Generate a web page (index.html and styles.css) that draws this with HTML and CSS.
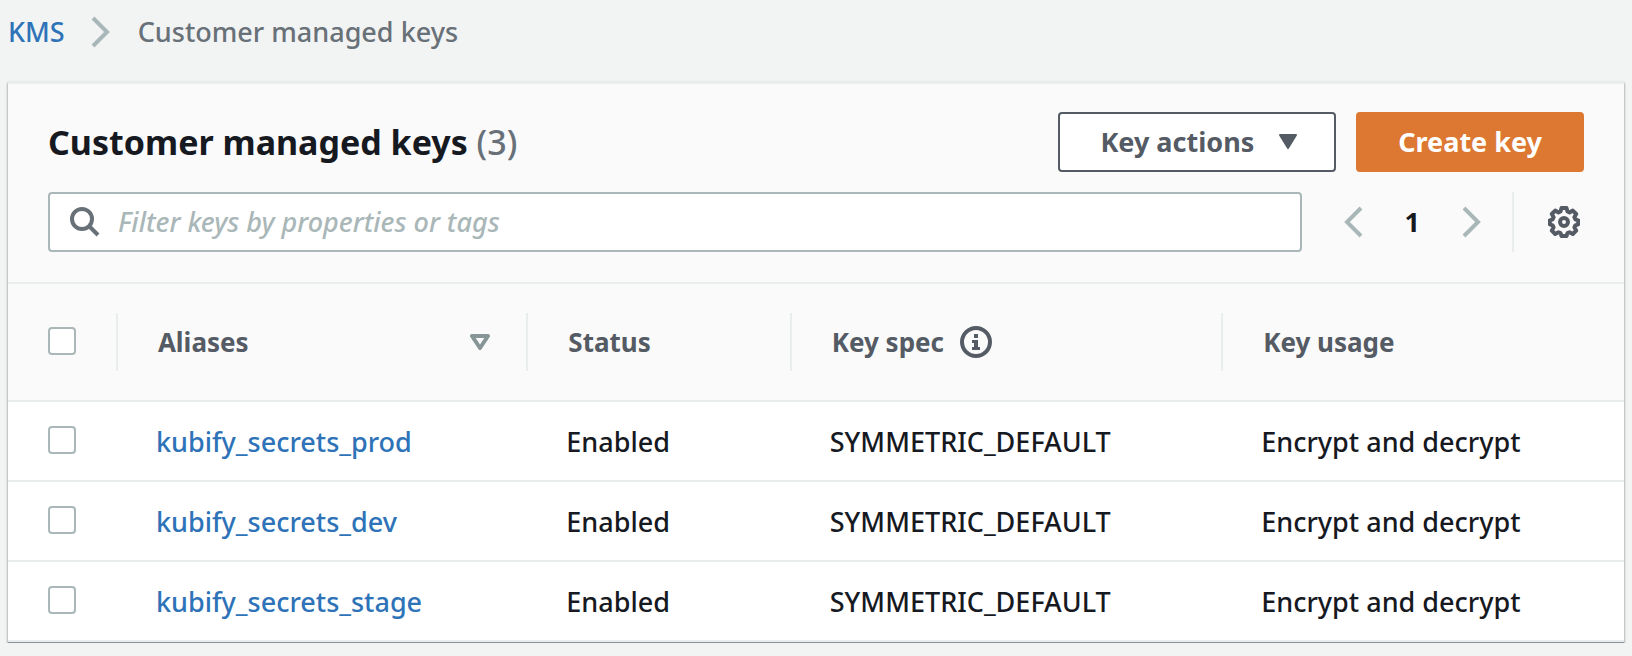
FILE: index.html
```html
<!DOCTYPE html>
<html lang="en">
<head>
<meta charset="utf-8">
<title>Customer managed keys</title>
<link rel="stylesheet" href="styles.css">
</head>
<body>
<nav class="breadcrumb" aria-label="Breadcrumb">
  <a class="link" href="#">KMS</a>
  <svg class="chevron" viewBox="0 0 20 32" aria-hidden="true"><path d="M2 2l14 14L2 30"/></svg>
  <span>Customer managed keys</span>
</nav>
<main class="panel">
  <header class="toolbar">
    <div class="title-row">
      <h1 class="title">Customer managed keys <span class="count">(3)</span></h1>
      <div class="actions">
        <button class="button" type="button">Key actions
          <svg class="caret" viewBox="0 0 20 16" aria-hidden="true"><path d="M2 1h16l-8 13z"/></svg>
        </button>
        <button class="button button-primary" type="button">Create key</button>
      </div>
    </div>
    <div class="filter-row">
      <label class="search">
        <svg class="search-icon" viewBox="0 0 30 30" aria-hidden="true"><circle cx="12" cy="12" r="10"/><path d="M19 19l9 9"/></svg>
        <input class="search-input" type="text" placeholder="Filter keys by properties or tags" aria-label="Filter keys">
      </label>
      <div class="pagination">
        <button class="icon-button" type="button" aria-label="Previous page"><svg class="chevron" viewBox="0 0 20 32" aria-hidden="true"><path d="M18 2L4 16l14 14"/></svg></button>
        <button class="icon-button page" type="button">1</button>
        <button class="icon-button" type="button" aria-label="Next page"><svg class="chevron" viewBox="0 0 20 32" aria-hidden="true"><path d="M2 2l14 14L2 30"/></svg></button>
      </div>
      <div class="settings">
        <button class="icon-button" type="button" aria-label="Preferences">
          <svg class="gear" viewBox="0 0 32 32" aria-hidden="true"><path d="M13.500 2h5l1 3.500 2 .900 3.300-1.800 3.400 3.400-1.800 3.300.900 2 2.900 1v4l-2.900 1-.900 2 1.800 3.300-3.400 3.400-3.300-1.800-2 .900-1 2.900h-5l-1-2.900-2-.900-3.300 1.800-3.400-3.400 1.800-3.300-.900-2-2.900-1v-4l2.900-1 .900-2-1.800-3.300 3.400-3.400 3.300 1.800 2-.900z"/><circle cx="16" cy="16" r="4"/></svg>
        </button>
      </div>
    </div>
  </header>
  <table class="keys">
    <colgroup><col class="col-select"><col class="col-alias"><col class="col-status"><col class="col-spec"><col></colgroup>
    <thead>
      <tr>
        <th><div class="head"><input class="check" type="checkbox" aria-label="Select all keys"></div></th>
        <th><div class="head">Aliases <svg class="caret caret-sort" viewBox="0 0 20 16" aria-hidden="true"><path d="M2 2h16l-8 12z"/></svg></div></th>
        <th><div class="head">Status</div></th>
        <th><div class="head">Key spec <svg class="info" viewBox="0 0 32 32" aria-hidden="true"><circle cx="16" cy="16" r="14"/><path d="M14 8h4v4h-4zM12 14h6v7h2v3h-8v-3h2v-4h-2z"/></svg></div></th>
        <th><div class="head">Key usage</div></th>
      </tr>
    </thead>
    <tbody>
      <tr>
        <td><input class="check" type="checkbox" aria-label="Select kubify_secrets_prod"></td>
        <td><a class="link" href="#">kubify_secrets_prod</a></td>
        <td>Enabled</td><td>SYMMETRIC_DEFAULT</td><td>Encrypt and decrypt</td>
      </tr>
      <tr>
        <td><input class="check" type="checkbox" aria-label="Select kubify_secrets_dev"></td>
        <td><a class="link" href="#">kubify_secrets_dev</a></td>
        <td>Enabled</td><td>SYMMETRIC_DEFAULT</td><td>Encrypt and decrypt</td>
      </tr>
      <tr>
        <td><input class="check" type="checkbox" aria-label="Select kubify_secrets_stage"></td>
        <td><a class="link" href="#">kubify_secrets_stage</a></td>
        <td>Enabled</td><td>SYMMETRIC_DEFAULT</td><td>Encrypt and decrypt</td>
      </tr>
    </tbody>
  </table>
</main>
</body>
</html>
```
FILE: styles.css
```css
* { box-sizing: border-box; }

body {
  margin: 0;
  padding: 0 8px;
  background: #f2f3f3;
  color: #16191f;
  font: 500 27px/40px "Noto Sans", "Open Sans", sans-serif;
}

button, input { font: inherit; }

.link { color: #2e73b8; text-decoration: none; }

.breadcrumb {
  display: flex;
  align-items: center;
  padding: 12px 0 30px;
  color: #687078;
}
.breadcrumb .chevron { margin: 0 27px 0 26px; }

.chevron {
  display: block;
  width: 20px;
  height: 32px;
  fill: none;
  stroke: #aab7b8;
  stroke-width: 4;
}

.panel {
  border-top: 2px solid #eaeded;
  border-bottom: 1px solid #879196;
  background: #fff;
  box-shadow: 0 1px 2px rgba(0, 28, 36, .3), 1px 1px 2px rgba(0, 28, 36, .15), -1px 1px 2px rgba(0, 28, 36, .15);
}

.toolbar {
  padding: 28px 40px 30px;
  background: #fafafa;
  border-bottom: 2px solid #eaeded;
}

.title-row {
  display: flex;
  align-items: center;
  justify-content: space-between;
  margin-bottom: 20px;
}
.title { margin: 0; font-size: 34px; font-weight: 700; }
.count { color: #687078; font-weight: 500; }
.actions { display: flex; gap: 20px; }

.button {
  display: flex;
  align-items: center;
  gap: 24px;
  height: 60px;
  padding: 0 36px 0 40px;
  border: 2px solid #545b64;
  border-radius: 4px;
  background: #fff;
  color: #545b64;
  font-weight: 700;
}
.button-primary {
  padding: 0 40px;
  border-color: #dd7832;
  background: #dd7832;
  color: #fff;
}

.caret {
  width: 20px;
  height: 16px;
  fill: #545b64;
  stroke: #545b64;
  stroke-width: 2;
  stroke-linejoin: round;
}
.caret-sort {
  margin-left: auto;
  fill: none;
  stroke: #879596;
  stroke-width: 4;
}

.filter-row { display: flex; align-items: stretch; }

.search {
  flex: 1;
  display: flex;
  align-items: center;
  gap: 18px;
  height: 60px;
  padding: 0 20px;
  border: 2px solid #aab7b8;
  border-radius: 4px;
  background: #fff;
}
.search-icon {
  flex: none;
  width: 30px;
  height: 30px;
  fill: none;
  stroke: #687078;
  stroke-width: 4;
}
.search-input {
  flex: 1;
  min-width: 0;
  height: 40px;
  padding: 0;
  border: 0;
  outline: 0;
  background: none;
}
.search-input::placeholder { color: #aab7b8; font-style: italic; opacity: 1; }

.icon-button {
  padding: 0;
  border: 0;
  background: none;
}
.pagination {
  display: flex;
  align-items: center;
  gap: 42px;
  padding: 0 30px 0 41px;
}
.page { color: #16191f; font-weight: 700; }
.settings {
  display: flex;
  align-items: center;
  padding: 0 4px 0 34px;
  border-left: 2px solid #eaeded;
}
.gear {
  display: block;
  width: 32px;
  height: 32px;
  fill: none;
  stroke: #545b64;
  stroke-width: 4;
  stroke-linejoin: round;
}

.keys {
  width: 100%;
  table-layout: fixed;
  border-collapse: separate;
  border-spacing: 0;
  text-align: left;
}
.col-select { width: 6.8%; }
.col-alias { width: 25.4%; }
.col-status { width: 16.3%; }
.col-spec { width: 26.7%; }

.keys th {
  padding: 29px 0;
  background: #fafafa;
  border-bottom: 2px solid #eaeded;
  color: #545b64;
  font-size: 26px;
  font-weight: 700;
}
.head {
  display: flex;
  align-items: center;
  gap: 16px;
  height: 58px;
  padding: 0 36px 0 40px;
  border-right: 2px solid #eaeded;
}
th:last-child .head { border-right: 0; }

.info { width: 32px; height: 32px; fill: #545b64; }
.info circle { fill: none; stroke: #545b64; stroke-width: 4; }

.keys td {
  height: 80px;
  padding: 2px 0 0 38px;
  border-bottom: 2px solid #eaeded;
}
.keys td:first-child { padding: 0 0 0 40px; }

.check {
  display: block;
  flex: none;
  appearance: none;
  width: 28px;
  height: 28px;
  margin: 0 0 2px;
  border: 2px solid #aab7b8;
  border-radius: 4px;
  background: #fff;
}
.check:checked { border-color: #2e73b8; background: #2e73b8; }
```
